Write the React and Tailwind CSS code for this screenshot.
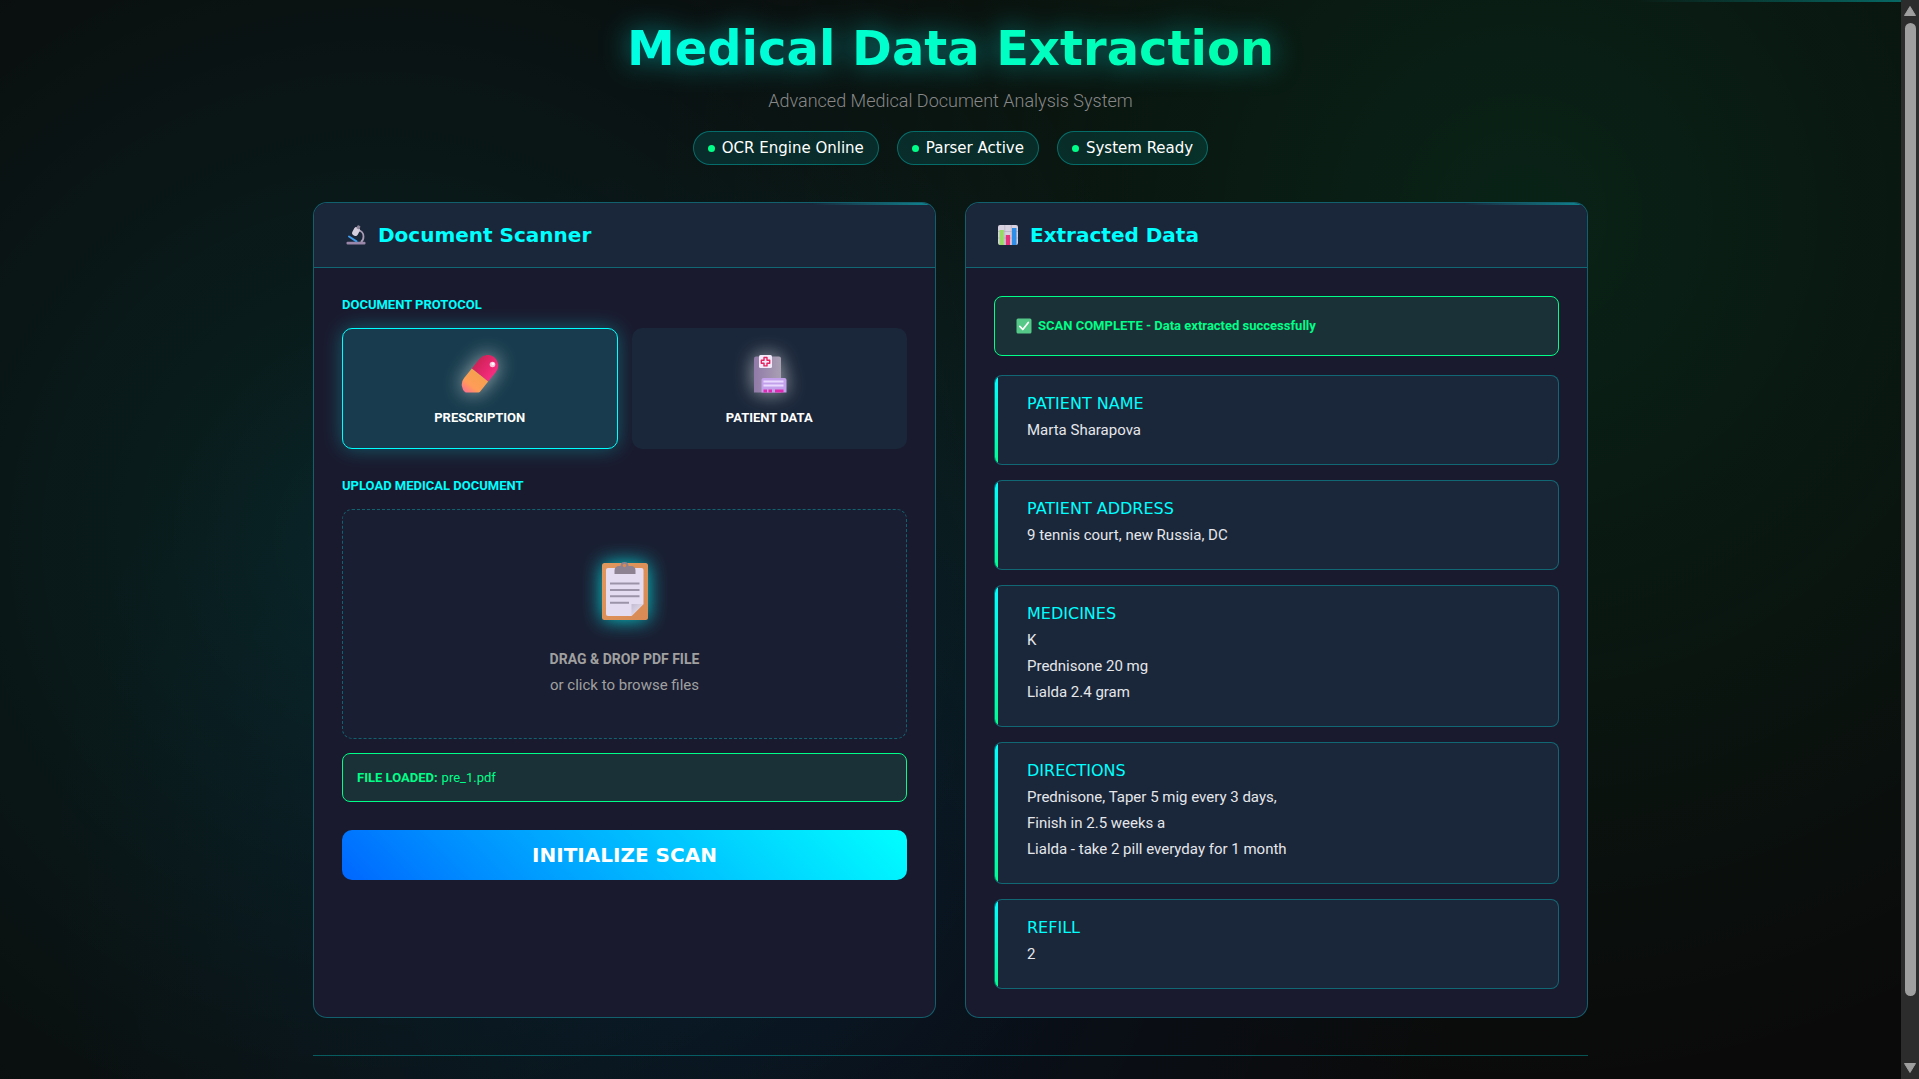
import { useState } from "react";

const DISPLAY = "font-['DejaVu_Sans',sans-serif]";
const BODY = "font-['Roboto',sans-serif]";

function MicroscopeIcon() {
  return (
    <svg viewBox="0 0 20 20" className="size-5 shrink-0" aria-hidden="true">
      <path d="M12 5.500c3.500 0 5.500 2.700 5.500 6 0 3-1.200 4.600-2.600 5.500" fill="none" stroke="#a79bb5" strokeWidth="1.800" />
      <rect x="0.500" y="16.800" width="19" height="2.700" rx="1" fill="#9a86a8" />
      <path d="M3 11.500l7.500 4.800" stroke="#3f9ae8" strokeWidth="2" strokeLinecap="round" />
      <rect x="7" y="2" width="6" height="9" rx="2.500" transform="rotate(28 10 6.500)" fill="#d5cede" />
      <rect x="10.800" y="0.500" width="3.200" height="3.500" rx="0.800" transform="rotate(28 12.400 2.200)" fill="#8d8398" />
    </svg>
  );
}

function ChartIcon() {
  return (
    <svg viewBox="0 0 20 20" className="size-5 shrink-0" aria-hidden="true">
      <rect width="20" height="20" rx="2" fill="#d8d2e0" />
      <path d="M0 6.500h20M0 13h20M6.800 0v20M13.300 0v20" stroke="#b6adc2" strokeWidth="0.700" />
      <rect x="1.500" y="5" width="4.300" height="15" fill="#96db62" />
      <rect x="7.800" y="10" width="4.300" height="10" fill="#e5337c" />
      <rect x="14" y="3" width="4.500" height="17" fill="#2f8ee8" />
    </svg>
  );
}

function CheckIcon() {
  return (
    <svg viewBox="0 0 16 16" className="size-4 shrink-0" aria-hidden="true">
      <rect x="0.500" y="0.500" width="15" height="15" rx="1.500" fill="#55c987" />
      <path d="M3.800 8.300l3 3.200 5.500-7" fill="none" stroke="#fff" strokeWidth="1.700" strokeLinecap="round" strokeLinejoin="round" />
    </svg>
  );
}

function PillIcon() {
  return (
    <svg viewBox="0 0 40 38" className="h-[38px] w-10 overflow-visible drop-shadow-[0_0_10px_rgba(255,255,255,0.6)]" aria-hidden="true">
      <defs>
        <linearGradient id="pillTop" x1="0" y1="0" x2="1" y2="0">
          <stop offset="0" stopColor="#cf2258" />
          <stop offset="1" stopColor="#f82d80" />
        </linearGradient>
        <linearGradient id="pillBottom" x1="0" y1="0" x2="0" y2="1">
          <stop offset="0" stopColor="#f5a04f" />
          <stop offset="0.600" stopColor="#ff9d58" />
          <stop offset="1" stopColor="#ff6f8c" />
        </linearGradient>
        <clipPath id="pillClip"><rect width="40" height="37.500" /></clipPath>
      </defs>
      <g clipPath="url(#pillClip)">
        <g transform="rotate(39 20 20)">
          <path d="M9.500 20V7.700a10.500 10.500 0 0 1 21 0V20z" fill="url(#pillTop)" />
          <path d="M9.500 20v12.300a10.500 10.500 0 0 0 21 0V20z" fill="url(#pillBottom)" />
        </g>
        <circle cx="32.500" cy="9.500" r="2.800" fill="#ffc9dc" />
        <circle cx="33" cy="8.800" r="1.400" fill="#fff" />
      </g>
    </svg>
  );
}

function HospitalIcon() {
  return (
    <svg viewBox="0 0 40 38" className="h-[38px] w-10 overflow-visible drop-shadow-[0_0_10px_rgba(255,255,255,0.6)]" aria-hidden="true">
      <defs>
        <linearGradient id="tower" x1="0" y1="0" x2="1" y2="0">
          <stop offset="0" stopColor="#917aa8" />
          <stop offset="1" stopColor="#a9a0b3" />
        </linearGradient>
      </defs>
      <path d="M5 3.500a2 2 0 0 1 2-2h23a2 2 0 0 1 2 2V37.500H5z" fill="url(#tower)" />
      <path d="M12.500 25a2 2 0 0 1 2-2h21a2 2 0 0 1 2 2v12.500h-25z" fill="#c2a0ea" />
      <path d="M14.500 26.500h20M14.500 30.500h20" stroke="#ead9ff" strokeWidth="1.800" />
      <path d="M14.500 34.500h3.500v3h-3.500zM19.500 34.500h3.500v3h-3.500zM26 34.500h8.500v3H26z" fill="#e02bb0" />
      <rect x="10" y="0" width="13" height="13" rx="1.500" fill="#f2e9fa" />
      <path d="M15 2.500h3v2.700h2.700v3H18v2.700h-3V8.200h-2.700v-3H15z" fill="none" stroke="#e5245f" strokeWidth="1.400" strokeLinejoin="round" />
    </svg>
  );
}

function ClipboardIcon() {
  return (
    <svg viewBox="0 0 46 59" className="h-[59px] w-[46px] overflow-visible drop-shadow-[0_0_10px_rgba(0,255,255,0.8)]" aria-hidden="true">
      <defs>
        <linearGradient id="board" x1="0" y1="0" x2="1" y2="1">
          <stop offset="0" stopColor="#e0975c" />
          <stop offset="1" stopColor="#d98a55" />
        </linearGradient>
        <linearGradient id="fold" x1="0" y1="0" x2="1" y2="1">
          <stop offset="0" stopColor="#c4bbd2" />
          <stop offset="0.500" stopColor="#d9d2e4" />
        </linearGradient>
      </defs>
      <rect x="0" y="2" width="46" height="57" rx="2.500" fill="url(#board)" />
      <path d="M4 9a2 2 0 0 1 2-2h33.500a2 2 0 0 1 2 2v34l-12 12H6a2 2 0 0 1-2-2z" fill="#e4dcf0" />
      <path d="M29.500 55V43h12z" fill="url(#fold)" />
      <path d="M8 22.500h29.500M8 29h29.500M8 35.300h29.500M8 41.700h19" stroke="#9b93a8" strokeWidth="1.900" />
      <path d="M12.500 13V9.500c0-3 2-4.500 4.500-4.500h1.500a4 4 0 0 1 8 0H29c3 0 4.500 1.500 4.500 4.500V13z" fill="#8c8291" />
      <circle cx="22.500" cy="4.500" r="1.700" fill="#d98a55" />
    </svg>
  );
}

function StatusPill({ children }) {
  return (
    <li className="flex h-[34px] items-center gap-[7px] rounded-full border border-[#00ffff]/30 bg-[#00ffff]/10 px-[14px] text-[15px] text-white">
      <span className="size-[7px] rounded-full bg-[#00ff88]" />
      {children}
    </li>
  );
}

function Panel({ icon, title, children }) {
  return (
    <section className="relative overflow-hidden rounded-[14px] border border-[#00ffff]/30 bg-[#1a1a2e]">
      <div className="absolute top-0 right-0 h-[2px] w-1/5 bg-linear-to-r from-transparent to-[#00ffff]/45" />
      <header className="flex h-[65px] items-center gap-3 border-b border-[#00ffff]/30 bg-[#1a2639] px-8">
        {icon}
        <h2 className={`${DISPLAY} text-xl font-bold text-[#00ffff]`}>{title}</h2>
      </header>
      <div className="p-7">{children}</div>
    </section>
  );
}

function ProtocolButton({ icon, label, active, onClick }) {
  const look = active
    ? "border-[#00ffff] bg-[#183c4d] shadow-[0_0_20px_rgba(0,255,255,0.3)]"
    : "border-transparent bg-[#1a2639]";
  return (
    <button
      type="button"
      aria-pressed={active}
      onClick={onClick}
      className={`flex h-[121px] cursor-pointer flex-col items-center gap-[15px] rounded-[10px] border pt-[26px] text-[13px] leading-5 font-bold text-white ${look}`}
    >
      {icon}
      {label}
    </button>
  );
}

const RESULTS = [
  { label: "PATIENT NAME", lines: ["Marta Sharapova"] },
  { label: "PATIENT ADDRESS", lines: ["9 tennis court, new Russia, DC"] },
  { label: "MEDICINES", lines: ["K", "Prednisone 20 mg", "Lialda 2.4 gram"] },
  {
    label: "DIRECTIONS",
    lines: ["Prednisone, Taper 5 mig every 3 days,", "Finish in 2.5 weeks a", "Lialda - take 2 pill everyday for 1 month"],
  },
  { label: "REFILL", lines: ["2"] },
];

function ResultCard({ label, lines }) {
  return (
    <div className="relative overflow-hidden rounded-lg border border-[#00ffff]/30 bg-[#1a2639] pt-[18px] pr-8 pb-[21px] pl-8">
      <div className="absolute inset-y-0 left-0 w-[3px] bg-linear-to-b from-[#00ffff] to-[#00ff88]" />
      <dt className={`${DISPLAY} mb-[3px] text-base leading-5 text-[#00ffff]`}>{label}</dt>
      {lines.map((line) => (
        <dd key={line} className="text-[15px] leading-[26px] text-gray-200">{line}</dd>
      ))}
    </div>
  );
}

function ScrollRail() {
  return (
    <div className="flex w-[18px] shrink-0 flex-col items-center justify-between bg-[#2c2c2c] py-[6px]" aria-hidden="true">
      <svg viewBox="0 0 12 10" className="h-[10px] w-3"><path d="M6 0.500L11.500 9.500H0.500z" fill="#9f9f9f" stroke="#9f9f9f" strokeLinejoin="round" /></svg>
      <div className="mt-[7px] mb-[67px] w-[11px] flex-1 rounded-full bg-[#9f9f9f]" />
      <svg viewBox="0 0 12 10" className="h-[10px] w-3"><path d="M6 9.500L11.500 0.500H0.500z" fill="#9f9f9f" stroke="#9f9f9f" strokeLinejoin="round" /></svg>
    </div>
  );
}

export default function App() {
  const [protocol, setProtocol] = useState("prescription");
  return (
    <div className={`${BODY} flex h-screen overflow-hidden bg-[#0a0a0a]`}>
      <div className="relative flex-1 overflow-hidden bg-[radial-gradient(circle_at_20%_50%,rgba(0,255,255,0.1)_0%,transparent_50%),radial-gradient(circle_at_80%_20%,rgba(0,255,136,0.1)_0%,transparent_50%),radial-gradient(circle_at_40%_80%,rgba(0,102,255,0.1)_0%,transparent_50%)]">
        <div className="absolute top-0 right-0 h-[2px] w-[14%] bg-linear-to-r from-transparent to-[#00ffff]/35" />
        <div className="mx-auto max-w-[1275px]">
          <header className="flex flex-col items-center pt-4 text-center">
            <h1 className={`${DISPLAY} w-full bg-linear-45 from-[#00ffff] to-[#00ff88] bg-clip-text text-5xl leading-[64px] font-bold text-transparent drop-shadow-[0_0_14px_rgba(0,255,255,0.5)]`}>
              Medical Data Extraction
            </h1>
            <p className="mt-[9px] text-[18px] leading-6 font-light text-[#888888]">Advanced Medical Document Analysis System</p>
            <ul className={`${DISPLAY} mt-[18px] flex gap-[18px]`}>
              <StatusPill>OCR Engine Online</StatusPill>
              <StatusPill>Parser Active</StatusPill>
              <StatusPill>System Ready</StatusPill>
            </ul>
          </header>

          <main className="mt-[37px] grid grid-cols-2 gap-[29px]">
            <Panel icon={<MicroscopeIcon />} title="Document Scanner">
              <h3 className="text-[13px] leading-[18px] font-bold text-[#00ffff]">DOCUMENT PROTOCOL</h3>
              <div className="mt-[14px] grid grid-cols-2 gap-[14px]">
                <ProtocolButton icon={<PillIcon />} label="PRESCRIPTION" active={protocol === "prescription"} onClick={() => setProtocol("prescription")} />
                <ProtocolButton icon={<HospitalIcon />} label="PATIENT DATA" active={protocol === "patient"} onClick={() => setProtocol("patient")} />
              </div>
              <h3 id="upload-title" className="mt-7 text-[13px] leading-[18px] font-bold text-[#00ffff]">UPLOAD MEDICAL DOCUMENT</h3>
              <label className="mt-[14px] flex cursor-pointer flex-col items-center rounded-[10px] border border-dashed border-[#00ffff]/30 bg-[#1a1e32] pt-[51px] pb-[39px] text-[#a0a0a0]">
                <input type="file" accept="application/pdf" aria-labelledby="upload-title" className="sr-only" />
                <ClipboardIcon />
                <span className="mt-[26px] text-sm leading-[26px] font-bold">DRAG &amp; DROP PDF FILE</span>
                <span className="text-[15px] leading-[27px]">or click to browse files</span>
              </label>
              <p className="mt-[14px] flex h-[49px] items-center gap-1 rounded-lg border border-[#00ff88] bg-[#1a3137] px-[14px] text-[13px] text-[#00ff88]">
                <strong>FILE LOADED:</strong> pre_1.pdf
              </p>
              <button type="button" className={`${DISPLAY} mt-7 h-[50px] w-full cursor-pointer rounded-[10px] bg-linear-45 from-[#0066ff] to-[#00ffff] text-xl font-bold text-white`}>
                INITIALIZE SCAN
              </button>
            </Panel>

            <Panel icon={<ChartIcon />} title="Extracted Data">
              <p className="flex h-[60px] items-center gap-[6px] rounded-lg border border-[#00ff88] bg-[#1a3137] px-[21px] text-[13px] font-bold text-[#00ff88]">
                <CheckIcon />
                SCAN COMPLETE - Data extracted successfully
              </p>
              <dl className="mt-[19px] flex flex-col gap-[15px]">
                {RESULTS.map((r) => (
                  <ResultCard key={r.label} {...r} />
                ))}
              </dl>
            </Panel>
          </main>
          <footer className="mt-[37px] border-t border-[#00ffff]/30 py-10" />
        </div>
      </div>
      <ScrollRail />
    </div>
  );
}
